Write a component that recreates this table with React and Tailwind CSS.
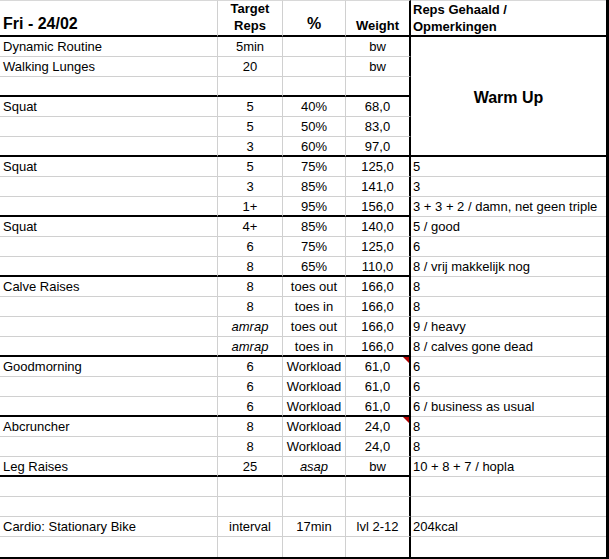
import React from "react";

const rows = [
  { c: ["Dynamic Routine", "5min", "", "bw", ""] },
  { c: ["Walking Lunges", "20", "", "bw", ""] },
  { c: ["", "", "", "", ""], thick: true },
  { c: ["Squat", "5", "40%", "68,0", ""] },
  { c: ["", "5", "50%", "83,0", ""] },
  { c: ["", "3", "60%", "97,0", ""], thick: true, thickAll: true },
  { c: ["Squat", "5", "75%", "125,0", "5"] },
  { c: ["", "3", "85%", "141,0", "3"] },
  { c: ["", "1+", "95%", "156,0", "3 + 3 + 2 / damn, net geen triple"], thick: true },
  { c: ["Squat", "4+", "85%", "140,0", "5 / good"] },
  { c: ["", "6", "75%", "125,0", "6"] },
  { c: ["", "8", "65%", "110,0", "8 / vrij makkelijk nog"], thick: true },
  { c: ["Calve Raises", "8", "toes out", "166,0", "8"] },
  { c: ["", "8", "toes in", "166,0", "8"] },
  { c: ["", "amrap", "toes out", "166,0", "9 / heavy"], it1: true },
  { c: ["", "amrap", "toes in", "166,0", "8 / calves gone dead"], it1: true, thick: true },
  { c: ["Goodmorning", "6", "Workload", "61,0", "6"], tri: true },
  { c: ["", "6", "Workload", "61,0", "6"] },
  { c: ["", "6", "Workload", "61,0", "6 / business as usual"], thick: true },
  { c: ["Abcruncher", "8", "Workload", "24,0", "8"], tri: true },
  { c: ["", "8", "Workload", "24,0", "8"] },
  { c: ["Leg Raises", "25", "asap", "bw", "10 + 8 + 7 / hopla"], it2: true, thick: true },
  { c: ["", "", "", "", ""] },
  { c: ["", "", "", "", ""] },
  { c: ["Cardio: Stationary Bike", "interval", "17min", "lvl 2-12", "204kcal"] },
  { c: ["", "", "", "", ""], last: true },
];

function Cell({ row, j }) {
  const thickBottom = (row.thick && j < 4) || (row.thickAll && j === 4);
  const bottom = row.last
    ? "border-b-0"
    : thickBottom
    ? "border-b-2 border-b-black"
    : "border-b border-b-[#d0d0d0]";
  const right =
    j === 3
      ? "border-r-2 border-r-black"
      : j === 4
      ? "border-r-0"
      : "border-r border-r-[#d0d0d0]";
  const align =
    j === 0 ? "text-left pl-[3px]" : j === 4 ? "text-left pl-[2px]" : "text-center";
  const italic = (j === 1 && row.it1) || (j === 2 && row.it2) ? "italic" : "";
  return (
    <div
      className={`relative h-[20px] overflow-visible whitespace-nowrap leading-[20px] ${bottom} ${right} ${align} ${italic}`}
    >
      {row.c[j]}
      {j === 3 && row.tri && (
        <span className="absolute right-0 top-0 w-0 h-0 border-t-[6px] border-t-[#b00000] border-l-[6px] border-l-transparent" />
      )}
    </div>
  );
}

export default function App() {
  const cells = [];
  rows.forEach((row, i) => {
    for (let j = 0; j < 5; j++) {
      if (j === 4 && i <= 5) {
        if (i === 0) {
          cells.push(
            <div
              key={`${i}-${j}`}
              className="row-span-6 flex items-center justify-center border-b-2 border-b-black text-[16px] font-bold pt-[4px]"
            >
              Warm Up
            </div>
          );
        }
        continue;
      }
      cells.push(<Cell key={`${i}-${j}`} row={row} j={j} />);
    }
  });

  return (
    <div className="w-[609px] h-[559px] bg-white overflow-hidden font-['Liberation_Sans',Arial,sans-serif] text-[13px] text-black">
      <div className="grid grid-cols-[218px_65px_63px_65px_195px] grid-rows-[37px] auto-rows-[20px] border-r-[3px] border-b-2 border-black w-[609px]">
        <div className="h-[37px] border-t border-t-[#d8d8d8] border-r border-r-[#d0d0d0] border-b-2 border-b-black flex items-end pl-[3px] pb-[2px] text-[16px] font-bold leading-[18px]">
          Fri - 24/02
        </div>
        <div className="h-[37px] border-t border-t-[#d8d8d8] border-r border-r-[#d0d0d0] border-b-2 border-b-black flex flex-col items-center justify-end pb-[1px] font-bold leading-[17px]">
          <span>Target</span>
          <span>Reps</span>
        </div>
        <div className="h-[37px] border-t border-t-[#d8d8d8] border-r border-r-[#d0d0d0] border-b-2 border-b-black flex items-end justify-center pb-[2px] text-[16px] font-bold leading-[18px]">
          %
        </div>
        <div className="h-[37px] border-t border-t-[#d8d8d8] border-r-2 border-r-black border-b-2 border-b-black flex items-end justify-center pb-[1px] font-bold leading-[17px]">
          Weight
        </div>
        <div className="h-[37px] border-t border-t-[#d8d8d8] border-b-2 border-b-black flex flex-col items-start justify-start pl-[2px] pt-0 font-bold leading-[17px]">
          <span>Reps Gehaald /</span>
          <span>Opmerkingen</span>
        </div>
        {cells}
      </div>
    </div>
  );
}
